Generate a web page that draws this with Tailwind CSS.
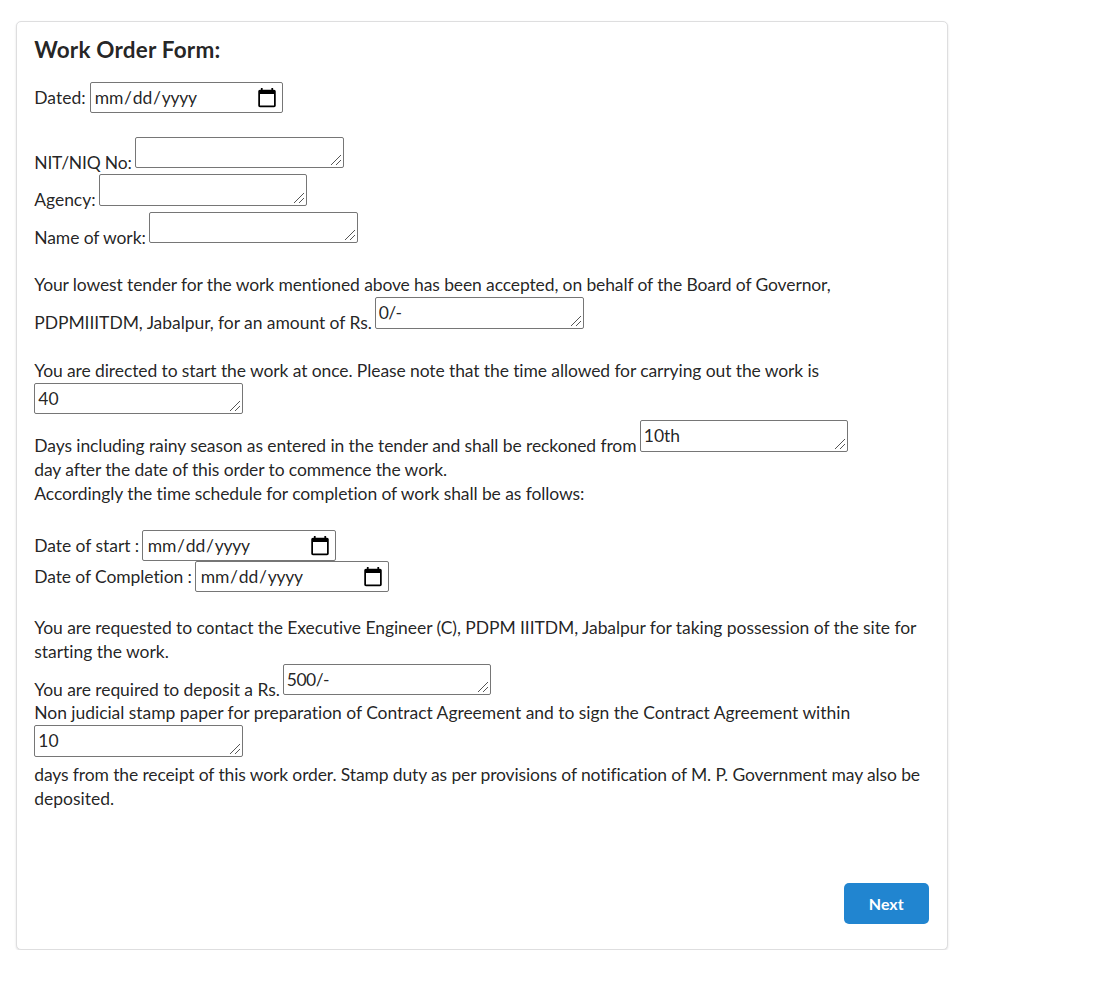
<!DOCTYPE html>
<html lang="en-US">
<head>
<meta charset="utf-8">
<title>Work Order Form</title>
<script src="https://cdn.jsdelivr.net/npm/@tailwindcss/browser@4"></script>
</head>
<body class="bg-white font-['Lato',sans-serif] text-[17.5px] leading-[24px] text-black/87">
<svg class="hidden"><symbol id="grip" viewBox="0 0 10 10"><path d="M0 9h1v1H0zM1 8h1v1H1zM2 7h1v1H2zM3 6h1v1H3zM4 5h1v1H4zM5 4h1v1H5zM6 3h1v1H6zM7 2h1v1H7zM8 1h1v1H8zM9 0h1v1H9zM5 9h1v1H5zM6 8h1v1H6zM7 7h1v1H7zM8 6h1v1H8zM9 5h1v1H9z" fill="#555"/></symbol></svg>
<main class="ml-4 mt-[21px] flex h-[929px] w-[932px] flex-col rounded-[5px] border border-[#dededf] bg-white px-[17.25px] pt-[14px] shadow-[0_1px_2px_0_rgba(34,36,38,0.15)]">
  <h1 class="h-[28px] text-[22.5px] leading-[28px] font-bold tracking-[0.2px] whitespace-nowrap">Work Order Form:</h1>
  <form class="whitespace-nowrap">
    <label class="mt-[18px] flex h-[31px] items-center"><span class="w-[55.5px]">Dated:</span><input type="date" class="h-[31px] w-[193px] rounded-[2px] border border-[#767676] bg-white pr-[2.25px] pl-[3px] tracking-[-0.22px] [&::-webkit-calendar-picker-indicator]:h-[22px] [&::-webkit-calendar-picker-indicator]:w-[22px]"></label>
    <label class="mt-[23.75px] flex h-[37.5px] items-end"><span class="-mb-px w-[100.5px] tracking-[-0.2px]">NIT/NIQ No:</span><span class="relative self-start"><textarea class="block h-[31.25px] w-[209px] resize-none overflow-hidden rounded-[2px] border border-[#767676] px-[3px] py-[2.5px]"></textarea><svg class="absolute right-[3px] bottom-[3px] size-[10px]" shape-rendering="crispEdges"><use href="#grip"/></svg></span></label>
    <label class="flex h-[37.5px] items-end"><span class="w-[64.5px] tracking-[-0.05px]">Agency:</span><span class="relative self-start"><textarea class="block h-[31.25px] w-[208px] resize-none overflow-hidden rounded-[2px] border border-[#767676] px-[3px] py-[2.5px]"></textarea><svg class="absolute right-[3px] bottom-[3px] size-[10px]" shape-rendering="crispEdges"><use href="#grip"/></svg></span></label>
    <label class="flex h-[37.5px] items-end"><span class="-mb-px w-[114.5px] tracking-[-0.1px]">Name of work:</span><span class="relative self-start"><textarea class="block h-[31.25px] w-[209px] resize-none overflow-hidden rounded-[2px] border border-[#767676] px-[3px] py-[2.5px]"></textarea><svg class="absolute right-[3px] bottom-[3px] size-[10px]" shape-rendering="crispEdges"><use href="#grip"/></svg></span></label>

    <p class="mt-[23.5px] tracking-[-0.12px]">Your lowest tender for the work mentioned above has been accepted, on behalf of the Board of Governor,</p>
    <label class="flex h-[37.5px] items-end"><span class="-mb-px w-[340.5px] tracking-[-0.06px]">PDPMIIITDM, Jabalpur, for an amount of Rs.</span><span class="relative self-start"><textarea class="block h-[31.75px] w-[209px] resize-none overflow-hidden rounded-[2px] border border-[#767676] px-[3px] pt-[3.25px] tracking-[-0.7px]">0/-</textarea><svg class="absolute right-[3px] bottom-[3px] size-[10px]" shape-rendering="crispEdges"><use href="#grip"/></svg></span></label>

    <label class="mt-[24.5px] block"><span class="tracking-[-0.1px]">You are directed to start the work at once. Please note that the time allowed for carrying out the work is</span>
      <span class="flex h-[37.5px]"><span class="relative self-start"><textarea class="block h-[31.25px] w-[209px] resize-none overflow-hidden rounded-[2px] border border-[#767676] px-[3px] pt-[3.5px]">40</textarea><svg class="absolute right-[3px] bottom-[3px] size-[10px]" shape-rendering="crispEdges"><use href="#grip"/></svg></span></span></label>
    <label class="flex h-[37.5px] items-end"><span class="w-[605.5px] tracking-[-0.09px]">Days including rainy season as entered in the tender and shall be reckoned from</span><span class="relative self-start"><textarea class="block h-[31.75px] w-[208px] resize-none overflow-hidden rounded-[2px] border border-[#767676] px-[3px] pt-[2.75px]">10th</textarea><svg class="absolute right-[3px] bottom-[3px] size-[10px]" shape-rendering="crispEdges"><use href="#grip"/></svg></span></label>
    <p class="tracking-[-0.11px]">day after the date of this order to commence the work.</p>
    <p class="tracking-[-0.09px]">Accordingly the time schedule for completion of work shall be as follows:</p>

    <label class="mt-[24.5px] flex h-[31px] items-center"><span class="w-[108px] tracking-[-0.05px]">Date of start :</span><input type="date" class="h-[31px] w-[194px] rounded-[2px] border border-[#767676] bg-white pr-[2.25px] pl-[3.5px] tracking-[-0.22px] [&::-webkit-calendar-picker-indicator]:h-[22px] [&::-webkit-calendar-picker-indicator]:w-[22px]"></label>
    <label class="flex h-[31px] items-center"><span class="w-[161px] tracking-[-0.1px]">Date of Completion :</span><input type="date" class="h-[31px] w-[194px] rounded-[2px] border border-[#767676] bg-white pr-[2.25px] pl-[3.5px] tracking-[-0.22px] [&::-webkit-calendar-picker-indicator]:h-[22px] [&::-webkit-calendar-picker-indicator]:w-[22px]"></label>

    <p class="mt-[23.5px] tracking-[-0.065px]">You are requested to contact the Executive Engineer (C), PDPM IIITDM, Jabalpur for taking possession of the site for</p>
    <p class="tracking-[-0.03px]">starting the work.</p>
    <label class="flex h-[37px] items-end"><span class="-mb-px w-[248.5px] tracking-[-0.07px]">You are required to deposit a Rs.</span><span class="relative self-start"><textarea class="block h-[31px] w-[208px] resize-none overflow-hidden rounded-[2px] border border-[#767676] px-[3px] pt-[3.5px] tracking-[-0.5px]">500/-</textarea><svg class="absolute right-[3px] bottom-[3px] size-[10px]" shape-rendering="crispEdges"><use href="#grip"/></svg></span></label>
    <label class="block"><span class="tracking-[-0.04px]">Non judicial stamp paper for preparation of Contract Agreement and to sign the Contract Agreement within</span>
      <span class="flex h-[38px]"><span class="relative self-start"><textarea class="block h-[32px] w-[209px] resize-none overflow-hidden rounded-[2px] border border-[#767676] px-[3px] pt-[3.5px]">10</textarea><svg class="absolute right-[3px] bottom-[3px] size-[10px]" shape-rendering="crispEdges"><use href="#grip"/></svg></span></span></label>
    <p class="tracking-[-0.125px]">days from the receipt of this work order. Stamp duty as per provisions of notification of M. P. Government may also be</p>
    <p>deposited.</p>
    <button type="button" class="mt-[72.25px] mr-[1px] ml-auto block h-[41px] w-[85px] rounded-[5px] bg-[#2185d0] pt-[1px] text-[16px] leading-[16px] font-bold text-white">Next</button>
  </form>
</main>
</body>
</html>
